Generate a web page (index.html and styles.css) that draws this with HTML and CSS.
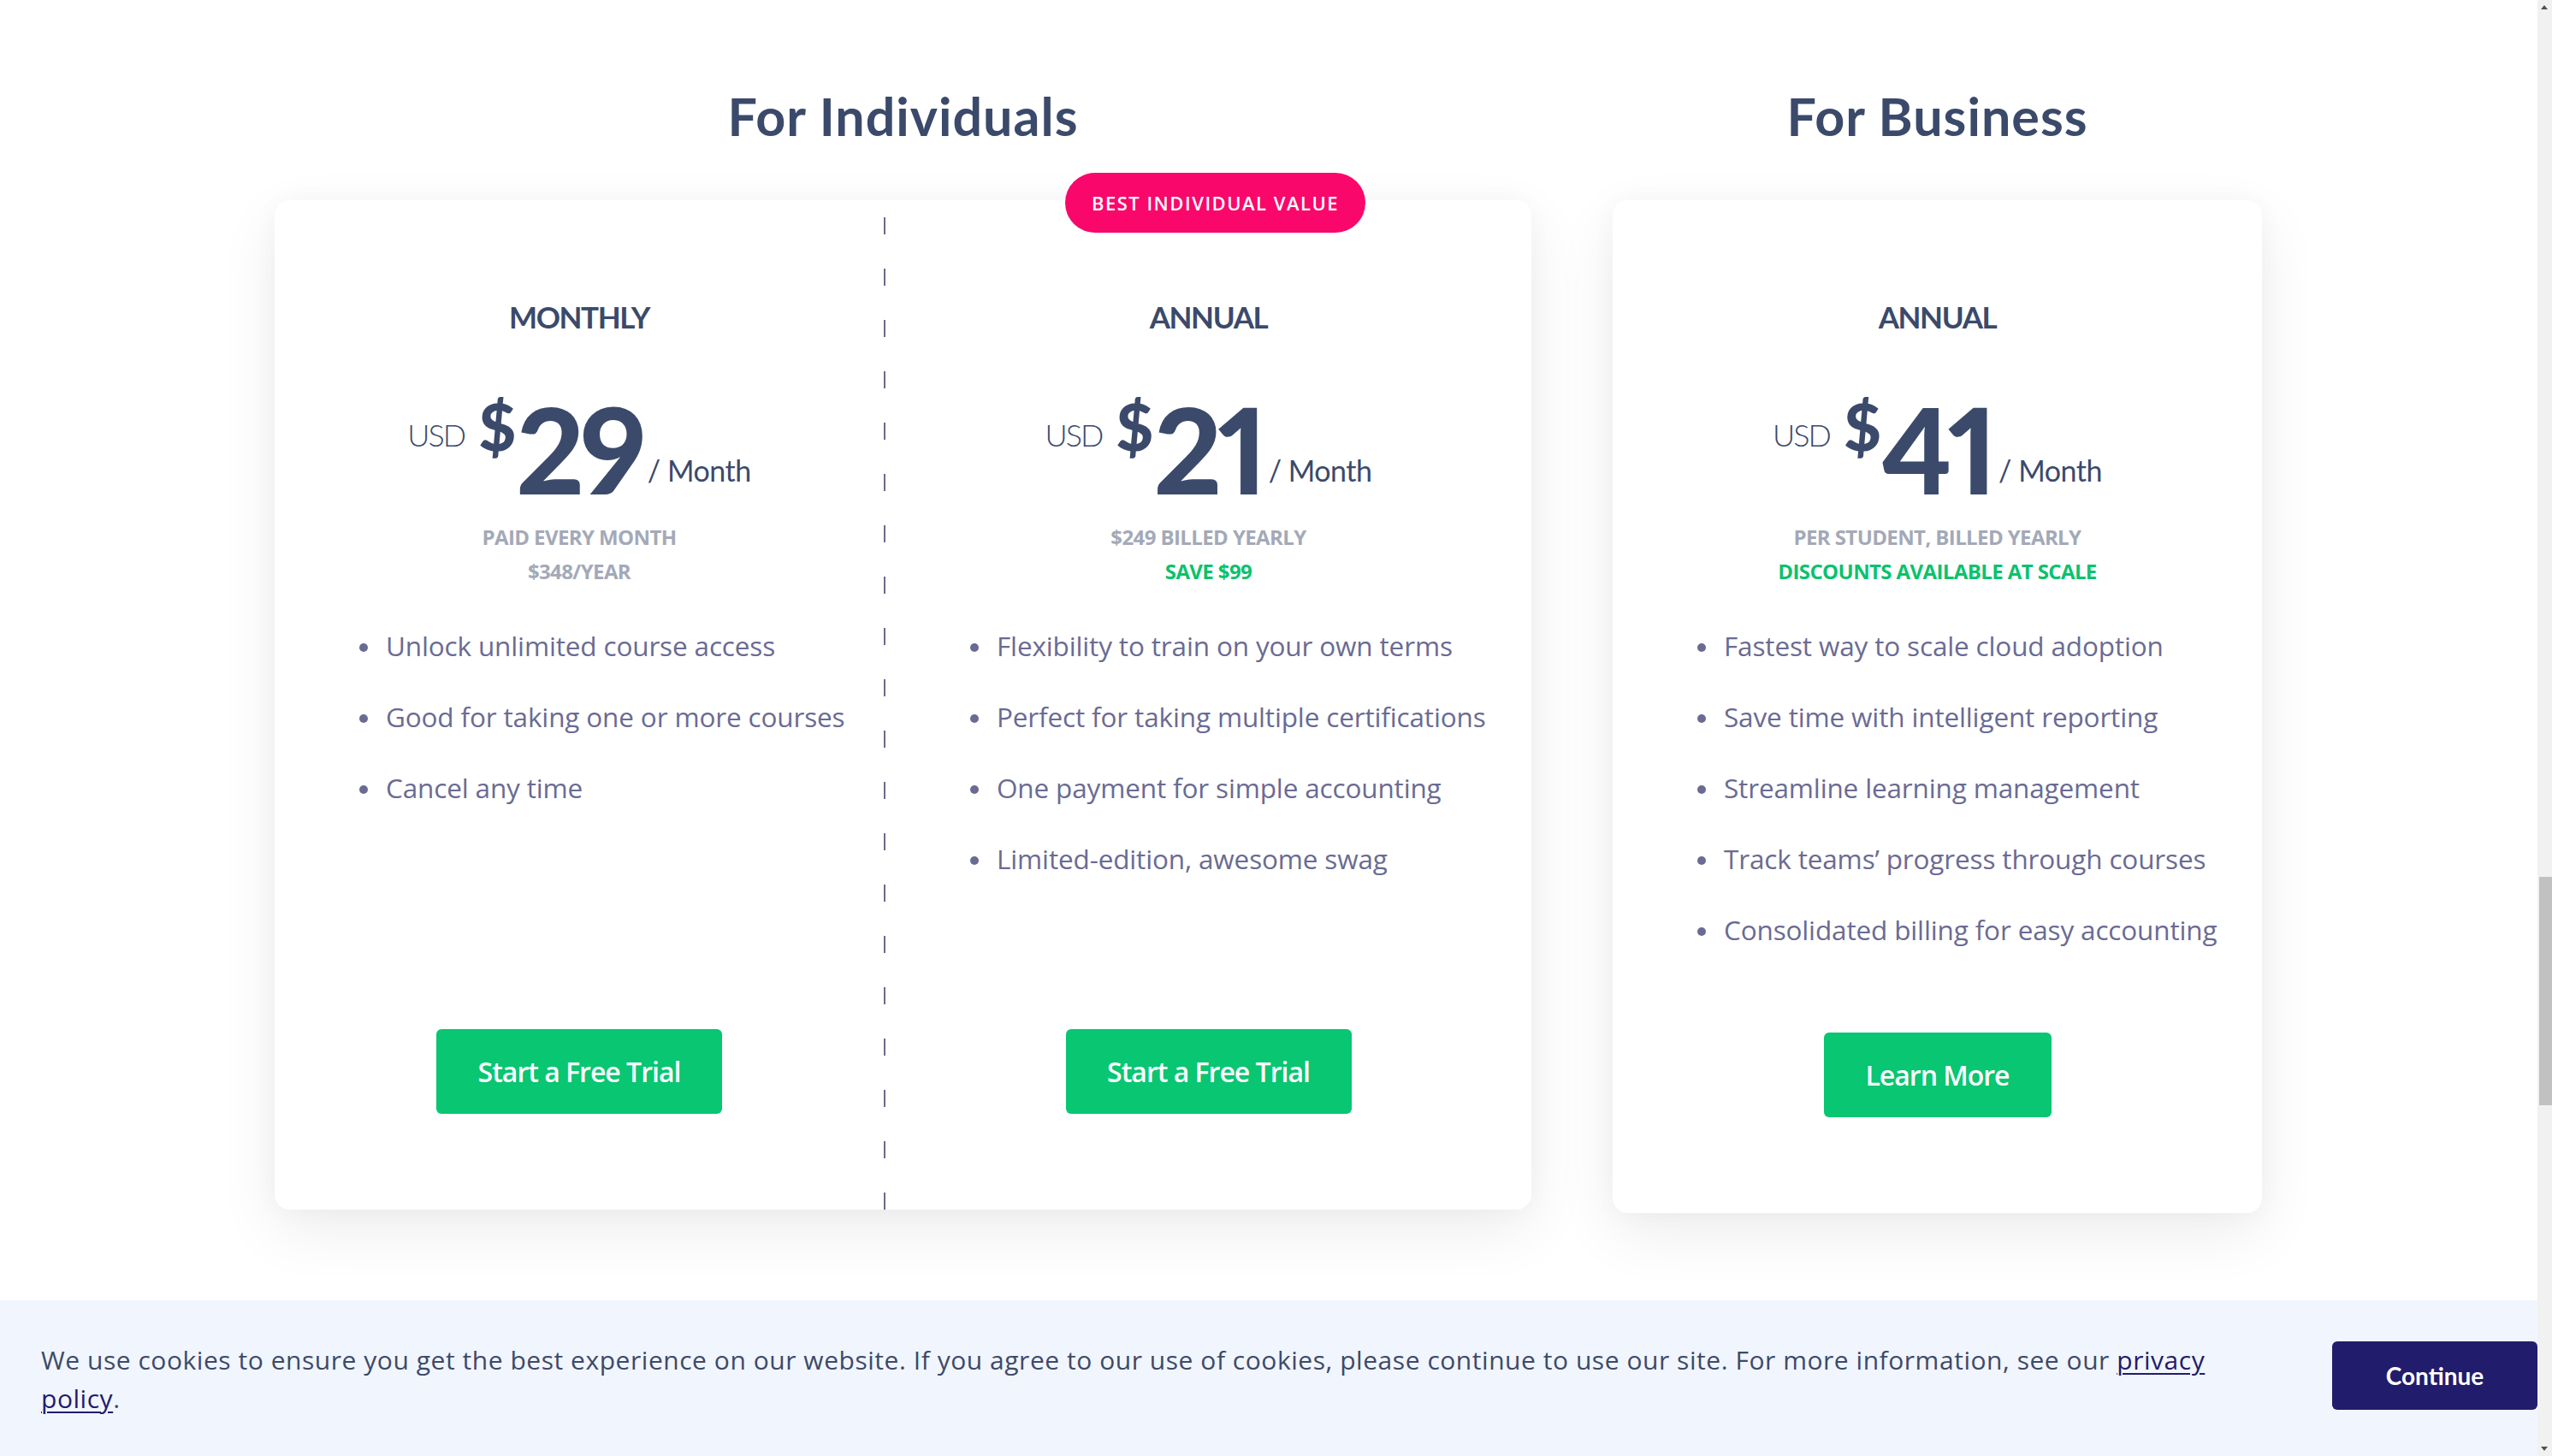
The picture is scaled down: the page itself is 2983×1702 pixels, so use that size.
FILE: index.html
```html
<!DOCTYPE html>
<html lang="en">
<head>
<meta charset="utf-8">
<title>Pricing</title>
<link rel="stylesheet" href="styles.css">
</head>
<body>
<main class="pricing">
  <section class="group group-individuals">
    <h2 class="group-title">For Individuals</h2>
    <div class="card card-individuals">
      <span class="badge">Best Individual Value</span>
      <div class="plan plan-monthly">
        <h3 class="plan-name">MONTHLY</h3>
        <div class="price">
          <span class="currency">USD</span>
          <span class="dollar">$</span>
          <span class="amount">29</span>
          <span class="period">/ Month</span>
        </div>
        <div class="notes">
          <p class="note">Paid every month</p>
          <p class="note">$348/year</p>
        </div>
        <ul class="features">
          <li>Unlock unlimited course access</li>
          <li>Good for taking one or more courses</li>
          <li>Cancel any time</li>
        </ul>
        <a class="btn btn-trial" href="#">Start a Free Trial</a>
      </div>
      <div class="divider"></div>
      <div class="plan plan-annual">
        <h3 class="plan-name">ANNUAL</h3>
        <div class="price">
          <span class="currency">USD</span>
          <span class="dollar">$</span>
          <span class="amount">21</span>
          <span class="period">/ Month</span>
        </div>
        <div class="notes">
          <p class="note">$249 billed yearly</p>
          <p class="note note-green">Save $99</p>
        </div>
        <ul class="features">
          <li>Flexibility to train on your own terms</li>
          <li>Perfect for taking multiple certifications</li>
          <li>One payment for simple accounting</li>
          <li>Limited-edition, awesome swag</li>
        </ul>
        <a class="btn btn-trial" href="#">Start a Free Trial</a>
      </div>
    </div>
  </section>
  <section class="group group-business">
    <h2 class="group-title">For Business</h2>
    <div class="card card-business">
      <div class="plan plan-business">
        <h3 class="plan-name">ANNUAL</h3>
        <div class="price">
          <span class="currency">USD</span>
          <span class="dollar">$</span>
          <span class="amount">41</span>
          <span class="period">/ Month</span>
        </div>
        <div class="notes">
          <p class="note">Per student, billed yearly</p>
          <p class="note note-green">Discounts available at scale</p>
        </div>
        <ul class="features">
          <li>Fastest way to scale cloud adoption</li>
          <li>Save time with intelligent reporting</li>
          <li>Streamline learning management</li>
          <li>Track teams’ progress through courses</li>
          <li>Consolidated billing for easy accounting</li>
        </ul>
        <a class="btn btn-learn" href="#">Learn More</a>
      </div>
    </div>
  </section>
</main>

<div class="cookie">
  <p class="cookie-text">We use cookies to ensure you get the best experience on our website. If you agree to our use of cookies, please continue to use our site. For more information, see our <a class="cookie-link" href="#">privacy policy</a>.</p>
  <button class="cookie-btn" type="button">Continue</button>
</div>

<div class="scrollbar">
  <span class="arrow arrow-up"></span>
  <span class="thumb"></span>
  <span class="arrow arrow-down"></span>
</div>
</body>
</html>
```

FILE: styles.css
```css
html, body {
  margin: 0;
  padding: 0;
  background: #ffffff;
}

body {
  font-family: "Open Sans", "Noto Sans", sans-serif;
  color: #3c4a6a;
  overflow: hidden;
  height: 1702px;
}

.pricing {
  display: flex;
  align-items: flex-start;
  gap: 95px;
  padding: 105px 0 0 321px;
}

.group {
  display: flex;
  flex-direction: column;
  align-items: center;
}

.group-individuals { width: 1469px; }
.group-business { width: 759px; }

.group-title {
  margin: 0 0 68px;
  font-family: "Lato", sans-serif;
  font-weight: 700;
  font-size: 61px;
  line-height: 61px;
  color: #3b4a6b;
  letter-spacing: 1px;
}

.card {
  position: relative;
  display: flex;
  width: 100%;
  background: #ffffff;
  border-radius: 18px;
  box-shadow: 0 24px 70px rgba(0, 0, 0, 0.075), 0 0 30px rgba(0, 0, 0, 0.03);
}

.card-individuals { height: 1180px; }
.card-business { height: 1184px; }

.badge {
  position: absolute;
  left: 924px;
  top: -32px;
  width: 351px;
  height: 70px;
  border-radius: 35px;
  background: #fa076c;
  color: #ffffff;
  display: flex;
  align-items: center;
  justify-content: center;
  font-family: "Open Sans", sans-serif;
  font-weight: 600;
  font-size: 22px;
  letter-spacing: 1.5px;
  text-transform: uppercase;
}

.plan {
  display: flex;
  flex-direction: column;
  align-items: center;
  box-sizing: border-box;
  padding: 119px 0 112px;
}

.plan-monthly { width: 712px; }
.plan-annual { width: 755px; }
.plan-business { width: 100%; }

.divider {
  width: 2px;
  align-self: stretch;
  background: repeating-linear-gradient(to bottom, transparent 0, transparent 20px, #6b6b8e 20px, #6b6b8e 40px, transparent 40px, transparent 60px);
}

.plan-name {
  margin: 0 0 67px;
  font-family: "Lato", sans-serif;
  font-weight: 700;
  font-size: 35px;
  line-height: 35px;
  letter-spacing: -1.4px;
  color: #3b4a6b;
}

.price {
  display: flex;
  align-items: flex-start;
  height: 139px;
  color: #3b4a6b;
  font-family: "Lato", sans-serif;
}

.currency {
  margin-top: 35px;
  margin-right: 16px;
  font-weight: 300;
  font-size: 36px;
  line-height: 36px;
  letter-spacing: -2px;
}

.dollar {
  margin-top: 5px;
  margin-right: 2px;
  font-weight: 900;
  font-size: 76px;
  line-height: 76px;
  letter-spacing: -2px;
}

.amount {
  font-weight: 900;
  font-size: 139px;
  line-height: 139px;
  letter-spacing: -5px;
  margin-right: 6px;
  font-variant-numeric: proportional-nums;
  font-feature-settings: "pnum" 1;
}

.period {
  margin-top: 78px;
  font-weight: 400;
  font-size: 34px;
  line-height: 34px;
  letter-spacing: -0.5px;
}

.notes {
  margin-top: 14px;
  display: flex;
  flex-direction: column;
  align-items: center;
}

.note {
  margin: 0;
  font-weight: 700;
  font-size: 24px;
  line-height: 40px;
  letter-spacing: -0.6px;
  text-transform: uppercase;
  color: #a3a9b8;
}

.note-green { color: #0ac26d; }

.features {
  align-self: stretch;
  display: flex;
  flex-direction: column;
  gap: 39px;
  margin: 45px 0 0;
  padding: 0 0 0 130px;
  list-style: none;
}

.features li {
  position: relative;
  font-size: 31.5px;
  line-height: 44px;
  letter-spacing: -0.15px;
  color: #6a6b93;
}

.features li::before {
  content: "";
  position: absolute;
  left: -31px;
  top: 19px;
  width: 10px;
  height: 10px;
  border-radius: 50%;
  background: #6a6b93;
}

.btn {
  margin-top: auto;
  height: 99px;
  display: flex;
  align-items: center;
  justify-content: center;
  border-radius: 6px;
  background: #08c672;
  color: #ffffff;
  text-decoration: none;
  font-weight: 600;
  font-size: 32px;
  letter-spacing: -1px;
}

.btn-trial { width: 334px; }
.btn-learn { width: 266px; }

.cookie {
  position: fixed;
  left: 0;
  bottom: 0;
  width: 2966px;
  height: 182px;
  box-sizing: border-box;
  padding: 48px 0 0 48px;
  display: flex;
  align-items: flex-start;
  background: #f1f5fd;
}

.cookie-text {
  width: 2620px;
  margin: 0;
  font-size: 30px;
  line-height: 44.5px;
  letter-spacing: 0.54px;
  color: #3d4a68;
}

.cookie-link {
  color: #221c6e;
  text-decoration: underline;
  text-decoration-thickness: 2px;
  text-underline-offset: 4px;
}

.cookie-btn {
  margin-left: auto;
  width: 240px;
  height: 80px;
  border: 0;
  border-radius: 6px;
  background: #221c6c;
  color: #ffffff;
  font-family: "Lato", sans-serif;
  font-weight: 700;
  font-size: 28px;
  padding: 0;
}

.scrollbar {
  position: fixed;
  top: 0;
  right: 0;
  width: 17px;
  height: 100%;
  background: #f1f1f1;
}

.thumb {
  position: absolute;
  left: 2px;
  right: 0;
  top: 1025px;
  height: 267px;
  background: #c1c1c1;
}

.arrow {
  position: absolute;
  left: 4px;
  width: 0;
  height: 0;
  border-left: 4.5px solid transparent;
  border-right: 4.5px solid transparent;
}

.arrow-up {
  top: 6px;
  border-bottom: 5px solid #505050;
}

.arrow-down {
  bottom: 6px;
  border-top: 5px solid #505050;
}
```
